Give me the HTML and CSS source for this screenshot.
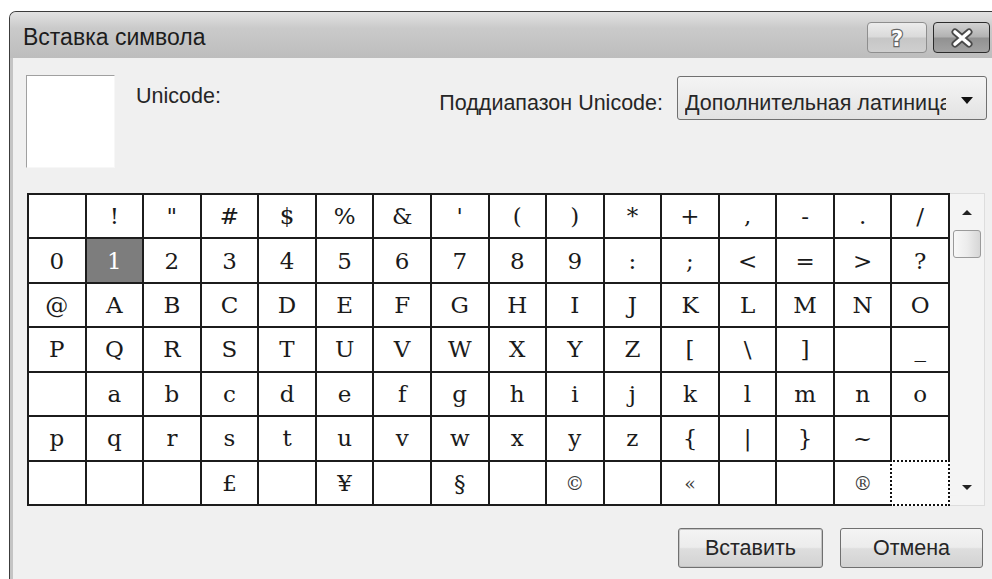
FILE: index.html
```html
<!DOCTYPE html>
<html lang="ru">
<head>
<meta charset="utf-8">
<title>Вставка символа</title>
<link rel="stylesheet" href="styles.css">
</head>
<body>
<div class="window">
  <div class="titlebar">
    <span class="title">Вставка символа</span>
    <div class="caption-buttons">
      <button class="cap cap-help" type="button" aria-label="Справка">
        <svg width="24" height="26" viewBox="0 0 24 26"><text x="12" y="21" text-anchor="middle" class="help-glyph">?</text></svg>
      </button>
      <button class="cap cap-close" type="button" aria-label="Закрыть">
        <svg width="24" height="20" viewBox="0 0 24 20">
          <path d="M5 4 L19 16 M19 4 L5 16" class="x-outline"/>
          <path d="M5 4 L19 16 M19 4 L5 16" class="x-fill"/>
        </svg>
      </button>
    </div>
  </div>
  <div class="client">
    <div class="top-row">
      <div class="preview"></div>
      <div class="code-label">Unicode:</div>
      <div class="range">
        <span class="range-label">Поддиапазон Unicode:</span>
        <div class="combo">
          <span class="combo-text">Дополнительная латиница</span>
          <span class="combo-arrow"></span>
        </div>
      </div>
    </div>
    <div class="table-row">
      <div class="charmap">
        <div class="cell"></div><div class="cell">!</div><div class="cell">"</div><div class="cell">#</div><div class="cell">$</div><div class="cell">%</div><div class="cell">&amp;</div><div class="cell">'</div><div class="cell">(</div><div class="cell">)</div><div class="cell">*</div><div class="cell">+</div><div class="cell">,</div><div class="cell">-</div><div class="cell">.</div><div class="cell">/</div>
        <div class="cell">0</div><div class="cell selected">1</div><div class="cell">2</div><div class="cell">3</div><div class="cell">4</div><div class="cell">5</div><div class="cell">6</div><div class="cell">7</div><div class="cell">8</div><div class="cell">9</div><div class="cell">:</div><div class="cell">;</div><div class="cell">&lt;</div><div class="cell">=</div><div class="cell">&gt;</div><div class="cell">?</div>
        <div class="cell">@</div><div class="cell">A</div><div class="cell">B</div><div class="cell">C</div><div class="cell">D</div><div class="cell">E</div><div class="cell">F</div><div class="cell">G</div><div class="cell">H</div><div class="cell">I</div><div class="cell">J</div><div class="cell">K</div><div class="cell">L</div><div class="cell">M</div><div class="cell">N</div><div class="cell">O</div>
        <div class="cell">P</div><div class="cell">Q</div><div class="cell">R</div><div class="cell">S</div><div class="cell">T</div><div class="cell">U</div><div class="cell">V</div><div class="cell">W</div><div class="cell">X</div><div class="cell">Y</div><div class="cell">Z</div><div class="cell">[</div><div class="cell">\</div><div class="cell">]</div><div class="cell"></div><div class="cell">_</div>
        <div class="cell"></div><div class="cell">a</div><div class="cell">b</div><div class="cell">c</div><div class="cell">d</div><div class="cell">e</div><div class="cell">f</div><div class="cell">g</div><div class="cell">h</div><div class="cell">i</div><div class="cell">j</div><div class="cell">k</div><div class="cell">l</div><div class="cell">m</div><div class="cell">n</div><div class="cell">o</div>
        <div class="cell">p</div><div class="cell">q</div><div class="cell">r</div><div class="cell">s</div><div class="cell">t</div><div class="cell">u</div><div class="cell">v</div><div class="cell">w</div><div class="cell">x</div><div class="cell">y</div><div class="cell">z</div><div class="cell">{</div><div class="cell">|</div><div class="cell">}</div><div class="cell">~</div><div class="cell"></div>
        <div class="cell"></div><div class="cell"></div><div class="cell"></div><div class="cell">£</div><div class="cell"></div><div class="cell">¥</div><div class="cell"></div><div class="cell">§</div><div class="cell"></div><div class="cell small">©</div><div class="cell"></div><div class="cell small">«</div><div class="cell"></div><div class="cell"></div><div class="cell small">®</div><div class="cell focused"></div>
      </div>
      <div class="scrollbar">
        <div class="sb-btn"><span class="arrow-up"></span></div>
        <div class="sb-thumb"></div>
        <div class="sb-btn sb-down"><span class="arrow-down"></span></div>
      </div>
    </div>
    <div class="actions">
      <button class="btn btn-default" type="button">Вставить</button>
      <button class="btn" type="button">Отмена</button>
    </div>
  </div>
</div>
</body>
</html>
```

FILE: styles.css
```css
html, body {
  margin: 0;
  padding: 0;
}

body {
  width: 992px;
  height: 579px;
  overflow: hidden;
  background: #ffffff;
  font-family: "Liberation Sans", Arial, sans-serif;
  color: #1e1e1e;
}

/* Dialog window frame */
.window {
  margin: 11px 0 0 9px;
  width: 1000px;
  height: 568px;
  box-sizing: border-box;
  border: 1px solid #3c3c3c;
  border-bottom: none;
  border-radius: 7px 7px 0 0;
  background: #c4c4c4;
  display: flex;
  flex-direction: column;
  overflow: hidden;
}

.titlebar {
  flex: none;
  height: 46px;
  box-sizing: border-box;
  padding: 4px 18px 0 13px;
  display: flex;
  align-items: center;
  background: linear-gradient(#e2e2e2 0%, #cacaca 35%, #bdbdbd 100%);
}

.title {
  font-size: 23px;
  color: #1c1c1c;
}

.caption-buttons {
  margin-left: auto;
  align-self: flex-start;
  margin-top: 6px;
  display: flex;
  gap: 6px;
}

.cap {
  height: 31px;
  padding: 0;
  box-sizing: border-box;
  border-radius: 4px;
  display: flex;
  align-items: center;
  justify-content: center;
}

.cap-help {
  width: 60px;
  border: 1px solid #8e8e8e;
  background: linear-gradient(#ececec 0%, #dadada 48%, #c6c6c6 52%, #cfcfcf 100%);
}

.help-glyph {
  font-family: "DejaVu Sans", sans-serif;
  font-weight: bold;
  font-size: 21px;
  fill: #ffffff;
  stroke: #666666;
  stroke-width: 2.4px;
  paint-order: stroke;
}

.cap-close {
  width: 57px;
  border: 1px solid #2b2b2b;
  background: linear-gradient(#d2d2d2 0%, #b2b2b2 48%, #919191 52%, #a2a2a2 100%);
}

.x-outline {
  stroke: #4a4a4a;
  stroke-width: 7px;
  stroke-linecap: round;
  fill: none;
}

.x-fill {
  stroke: #ffffff;
  stroke-width: 3.6px;
  stroke-linecap: round;
  fill: none;
}

/* Client area */
.client {
  flex: 1;
  margin-left: 3px;
  background: #f0f0f0;
  padding: 17px 0 0 13px;
}

.top-row {
  width: 961px;
  height: 93px;
  display: flex;
  align-items: flex-start;
}

.preview {
  width: 89px;
  height: 93px;
  box-sizing: border-box;
  background: #ffffff;
  border-top: 1px solid #a0a0a0;
  border-left: 1px solid #a0a0a0;
  border-right: 1px solid #f7f7f7;
  border-bottom: 1px solid #f7f7f7;
}

.code-label,
.range-label,
.combo-text,
.btn {
  font-size: 21.5px;
  color: #262626;
}

.code-label {
  margin: 9px 0 0 21px;
}

.range {
  margin-left: auto;
  display: flex;
  align-items: flex-start;
}

.range-label {
  margin: 16px 14px 0 0;
  white-space: nowrap;
}

.combo {
  margin-top: 1px;
  width: 310px;
  height: 44px;
  box-sizing: border-box;
  border: 1px solid #707070;
  border-radius: 3px;
  background: linear-gradient(#f4f4f4 0%, #ececec 50%, #e2e2e2 100%);
  display: flex;
  align-items: flex-start;
}

.combo-text {
  margin: 14px 0 0 7px;
  width: 261px;
  overflow: hidden;
  white-space: nowrap;
}

.combo-arrow {
  margin: 20px 13px 0 auto;
  width: 0;
  height: 0;
  border-left: 6px solid transparent;
  border-right: 6px solid transparent;
  border-top: 7px solid #111111;
}

/* Character table with its scroll bar */
.table-row {
  margin: 25px 0 0 1px;
  display: flex;
}

.charmap {
  width: 923px;
  height: 313px;
  box-sizing: border-box;
  padding: 2px;
  gap: 2px;
  background: #1c1c1c;
  display: grid;
  grid-template-columns: repeat(16, 1fr);
  grid-template-rows: repeat(7, 1fr);
}

.cell {
  background: #ffffff;
  display: flex;
  align-items: center;
  justify-content: center;
  font-family: "DejaVu Serif", "Liberation Serif", serif;
  font-size: 23px;
  color: #1a1a1a;
}

.cell.small {
  font-size: 19px;
  color: #3a3a3a;
}

.cell.selected {
  background: #7d7d7d;
  color: #ffffff;
}

.cell.focused {
  box-shadow: 0 0 0 2px #ffffff;
  outline: 2px dotted #111111;
}

.scrollbar {
  width: 35px;
  height: 313px;
  box-sizing: border-box;
  border: 1px solid #dddddd;
  border-left: none;
  background: #f4f4f4;
  display: flex;
  flex-direction: column;
  align-items: center;
}

.sb-btn {
  height: 36px;
  width: 100%;
  display: flex;
  align-items: center;
  justify-content: center;
}

.sb-down {
  margin-top: auto;
}

.arrow-up,
.arrow-down {
  width: 0;
  height: 0;
  border-left: 5px solid transparent;
  border-right: 5px solid transparent;
}

.arrow-up {
  border-bottom: 5px solid #222222;
}

.arrow-down {
  border-top: 5px solid #222222;
}

.sb-thumb {
  width: 28px;
  height: 28px;
  box-sizing: border-box;
  border: 1px solid #9a9a9a;
  border-radius: 3px;
  background: linear-gradient(to right, #f8f8f8 0%, #ececec 50%, #d6d6d6 100%);
}

/* Dialog buttons */
.actions {
  margin-top: 22px;
  width: 957px;
  display: flex;
  justify-content: flex-end;
  gap: 17px;
}

.btn {
  height: 40px;
  box-sizing: border-box;
  border: 1px solid #707070;
  border-radius: 3px;
  background: linear-gradient(#f4f4f4 0%, #ececec 48%, #dedede 52%, #d2d2d2 100%);
  font-family: "Liberation Sans", Arial, sans-serif;
  padding: 0;
}

.btn-default {
  width: 145px;
  box-shadow: inset 0 0 0 1px #c4c4c4;
}

.btn + .btn {
  width: 143px;
}
```
